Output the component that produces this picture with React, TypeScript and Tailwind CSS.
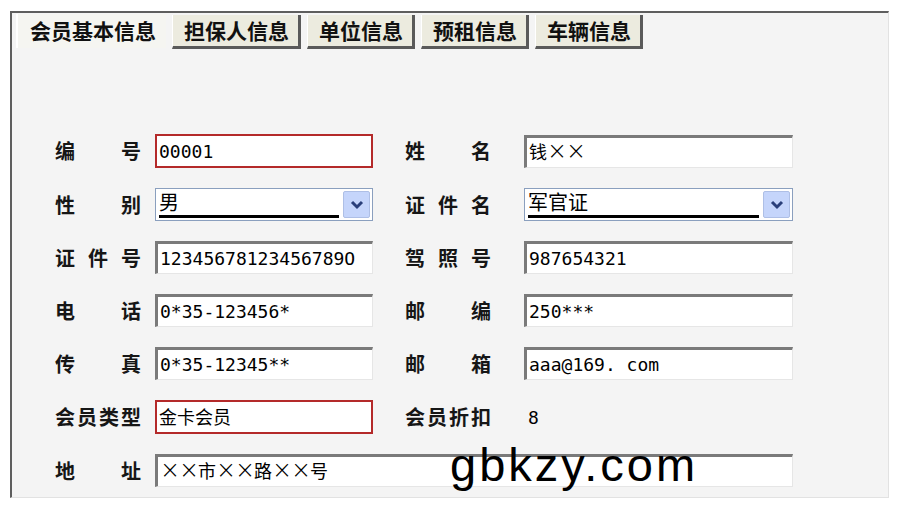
import React from 'react';

const cjk = "font-['Noto_Sans_CJK_SC','Noto_Sans',sans-serif]";
const mono = "font-['DejaVu_Sans_Mono','Noto_Sans_CJK_SC',monospace]";

const tabs = ['会员基本信息', '担保人信息', '单位信息', '预租信息', '车辆信息'];

const Label = ({ chars }: { chars: string[] }) => (
    <div className={`flex justify-between w-[86px] text-[20px] leading-none text-[#161616] font-semibold ${cjk}`}>
        {chars.map((c, i) => (
            <span key={i}>{c}</span>
        ))}
    </div>
);

// the × in the old form is drawn full width, so give each one a fixed box
const Value = ({ text }: { text: string }) => (
    <span className="whitespace-pre">
        {text.split('').map((c, i) =>
            c === '×' ? (
                <span key={i} className="inline-block w-[19px] text-center text-[24px] font-light leading-none font-['DejaVu_Sans',sans-serif]">
                    ×
                </span>
            ) : (
                <span key={i}>{c}</span>
            )
        )}
    </span>
);

const TextBox = ({ value, red = false, w }: { value: string; red?: boolean; w: string }) => (
    <div
        className={
            red
                ? `${w} h-[34px] bg-white border-2 border-[#b42a2a] flex items-center pl-[2px] text-[18px] text-black ${mono}`
                : `${w} h-[33px] bg-white border-t-[3px] border-l-[3px] border-r border-b border-t-[#7a7a7a] border-l-[#7a7a7a] border-r-[#e6e6e6] border-b-[#e6e6e6] flex items-center pl-[2px] text-[18px] text-black ${mono}`
        }
    >
        <Value text={value} />
    </div>
);

const SelectBox = ({ value, w }: { value: string; w: string }) => (
    <div className={`${w} h-[33px] bg-white border border-[#8a9fbe] flex items-center pl-[3px] pr-[2px]`}>
        <div className="flex-1 h-full flex flex-col justify-center pr-[4px]">
            <span className={`text-[20px] leading-none text-black ${cjk}`}>{value}</span>
            <div className="h-[3px] bg-black mt-[3px]" />
        </div>
        <div className="w-[27px] h-[27px] bg-[#c5d5fb] border border-[#aebfe6] rounded-[2px] flex items-center justify-center">
            <svg width="14" height="10" viewBox="0 0 14 10">
                <path d="M2 2 L7 7 L12 2" fill="none" stroke="#2a3f7a" strokeWidth="3" />
            </svg>
        </div>
    </div>
);

export default function App() {
    const lw = 'w-[218px]';
    const rw = 'w-[269px]';
    return (
        <div className="relative w-[900px] h-[510px] bg-white overflow-hidden">
            <div className="ml-[10px] mt-[11px] w-[879px] h-[487px] bg-[#f4f4f4] border-t-2 border-l-2 border-t-[#5e5e5e] border-l-[#5e5e5e] border-r border-b border-r-[#e2e2e2] border-b-[#e2e2e2]">
                <div className="flex items-start gap-[6px] pl-[4px] pt-[1px]">
                    {tabs.map((t, i) =>
                        i === 0 ? (
                            <div
                                key={t}
                                className={`h-[34px] pl-[12px] pr-[10px] flex items-center bg-[#f5f5f1] border-l-2 border-l-white text-[21px] text-[#111] font-semibold ${cjk}`}
                            >
                                {t}
                            </div>
                        ) : (
                            <div
                                key={t}
                                className={`h-[34px] mt-[1px] pl-[11px] pr-[9px] flex items-center bg-[#ecebdf] border-r-[3px] border-b-[3px] border-r-[#5a5a5a] border-b-[#5a5a5a] border-l border-l-white text-[21px] text-[#111] font-semibold ${cjk}`}
                            >
                                {t}
                            </div>
                        )
                    )}
                </div>

                <div className="grid grid-cols-[100px_218px_32px_119px_269px] gap-y-[20px] items-center ml-[43px] mt-[85px]">
                    <Label chars={['编', '号']} />
                    <TextBox value="00001" red w={lw} />
                    <div />
                    <Label chars={['姓', '名']} />
                    <TextBox value="钱××" w={rw} />

                    <Label chars={['性', '别']} />
                    <SelectBox value="男" w={lw} />
                    <div />
                    <Label chars={['证', '件', '名']} />
                    <SelectBox value="军官证" w={rw} />

                    <Label chars={['证', '件', '号']} />
                    <TextBox value="12345678123456789O" w={lw} />
                    <div />
                    <Label chars={['驾', '照', '号']} />
                    <TextBox value="987654321" w={rw} />

                    <Label chars={['电', '话']} />
                    <TextBox value="0*35-123456*" w={lw} />
                    <div />
                    <Label chars={['邮', '编']} />
                    <TextBox value="250***" w={rw} />

                    <Label chars={['传', '真']} />
                    <TextBox value="0*35-12345**" w={lw} />
                    <div />
                    <Label chars={['邮', '箱']} />
                    <TextBox value="aaa@169. com" w={rw} />

                    <Label chars={['会', '员', '类', '型']} />
                    <TextBox value="金卡会员" red w={lw} />
                    <div />
                    <Label chars={['会', '员', '折', '扣']} />
                    <div className={`text-[18px] text-black pl-[4px] ${mono}`}>8</div>

                    <Label chars={['地', '址']} />
                    <div className="col-span-4">
                        <TextBox value="××市××路××号" w="w-[638px]" />
                    </div>
                </div>
            </div>
            <div className="absolute left-[450px] top-[441px] text-[47px] leading-none tracking-[3px] text-black font-['Liberation_Sans',sans-serif]">
                gbkzy.com
            </div>
        </div>
    );
}
